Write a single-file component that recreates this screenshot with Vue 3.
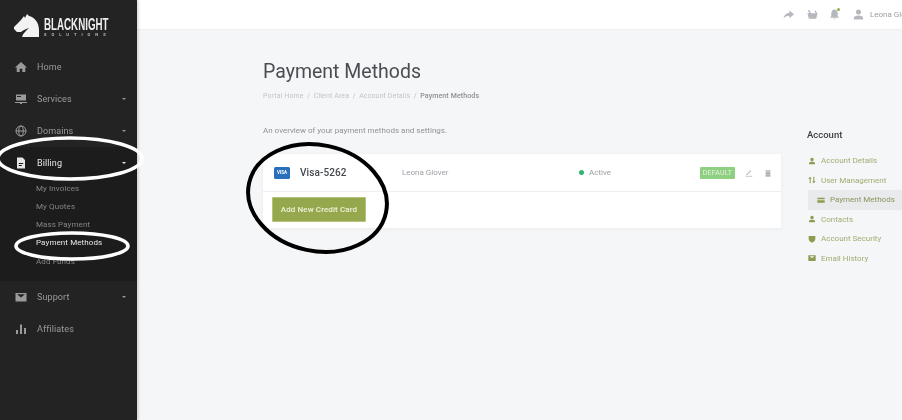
<template>
  <div class="page">
    <aside class="sidebar">
      <div class="logo">
        <svg class="horse" width="26" height="24" viewBox="0 0 26 24">
          <path d="M13 0 L15 2 C20 3 25 8 25 16 L25 23 L8 23 C9 19 12 17 15 14 C12 15 9 16 7 18 L3 18 L0 15 L0 13 L6 7 C8 5 9 3 10 2 L11 4 Z" fill="#f2f2f2" />
        </svg>
        <div class="logo-text">
          <div class="logo-name">BLACKNIGHT</div>
          <div class="logo-sub">SOLUTIONS</div>
        </div>
      </div>

      <nav>
        <div class="nav-item">
          <svg class="nav-icon" viewBox="0 0 12 12"><path d="M6 1 L12 6.5 L10.3 6.5 L10.3 11 L7.3 11 L7.3 7.7 L4.7 7.7 L4.7 11 L1.7 11 L1.7 6.5 L0 6.5 Z" fill="currentColor" /></svg>
          <span>Home</span>
        </div>
        <div class="nav-item">
          <svg class="nav-icon" viewBox="0 0 12 12"><path fill-rule="evenodd" d="M1 1.5 H11 V7.5 H1 Z M2 3 V4 H6 V3 Z M0 9 H12 V10 H0 Z M5 10 H7 V11 H5 Z" fill="currentColor" /></svg>
          <span>Services</span>
          <i class="caret"></i>
        </div>
        <div class="nav-item">
          <svg class="nav-icon" viewBox="0 0 12 12" fill="none" stroke="currentColor" stroke-width="1"><circle cx="6" cy="6" r="5" /><ellipse cx="6" cy="6" rx="2.2" ry="5" /><path d="M1 6 H11" /></svg>
          <span>Domains</span>
          <i class="caret"></i>
        </div>
        <div class="nav-item active">
          <svg class="nav-icon" viewBox="0 0 12 12"><path fill-rule="evenodd" d="M2 0.5 H7.5 L10 3 V11.5 H2 Z M3.8 6 V7 H8.2 V6 Z M3.8 8 V9 H6.8 V8 Z" fill="currentColor" /></svg>
          <span>Billing</span>
          <i class="caret"></i>
        </div>
        <div class="submenu">
          <div v-for="s in subItems" :key="s" class="sub-item" :class="{ current: s === 'Payment Methods' }">{{ s }}</div>
        </div>
        <div class="nav-item">
          <svg class="nav-icon" viewBox="0 0 12 12"><path fill-rule="evenodd" d="M0.5 2 H11.5 V10.5 H0.5 Z M2 3.2 L6 6.6 L10 3.2 Z" fill="currentColor" /></svg>
          <span>Support</span>
          <i class="caret"></i>
        </div>
        <div class="nav-item">
          <svg class="nav-icon" viewBox="0 0 12 12"><path d="M1 7 H3 V11 H1 Z M5 1.5 H7 V11 H5 Z M9 5 H11 V11 H9 Z" fill="currentColor" /></svg>
          <span>Affiliates</span>
        </div>
      </nav>
    </aside>

    <div class="main">
      <header class="topbar">
        <svg class="top-icon" viewBox="0 0 12 12"><path d="M7 1.5 L12 5.8 L7 10 V7.4 C4 7.4 2 8.2 0.5 10.5 C1 6.8 3.4 4.6 7 4.2 Z" fill="currentColor" /></svg>
        <svg class="top-icon basket" viewBox="0 0 12 12"><path d="M0.5 4.5 H11.5 L10 10.5 H2 Z M2.5 4.5 L1 1 H2.6 L4.2 4.5 Z M9.5 4.5 L8 2 H9.5 L11 4.5 Z" fill="currentColor" /></svg>
        <span class="bell">
          <svg class="top-icon" viewBox="0 0 12 12"><path d="M6 0.5 C8.4 0.5 9.5 2.5 9.5 5 V8 L11 9.5 H1 L2.5 8 V5 C2.5 2.5 3.6 0.5 6 0.5 Z M4.8 10.3 H7.2 L6 11.8 Z" fill="currentColor" /></svg>
          <i class="bell-dot"></i>
        </span>
        <svg class="top-icon user" viewBox="0 0 12 12"><path d="M6 0.5 A2.7 2.7 0 1 1 6 6 A2.7 2.7 0 1 1 6 0.5 Z M1 11.5 V9.5 C1 8 3 7 6 7 C9 7 11 8 11 9.5 V11.5 Z" fill="currentColor" /></svg>
        <span class="user-name">Leona Glover</span>
      </header>

      <div class="body">
        <section class="content">
          <h1>Payment Methods</h1>
          <div class="crumbs">
            <span>Portal Home</span><em>/</em><span>Client Area</span><em>/</em><span>Account Details</span><em>/</em><b>Payment Methods</b>
          </div>
          <p class="intro">An overview of your payment methods and settings.</p>

          <div class="card">
            <div class="row">
              <span class="visa">VISA</span>
              <span class="card-name">Visa-5262</span>
              <span class="holder">Leona Glover</span>
              <span class="status"><i class="dot"></i>Active</span>
              <span class="badge">DEFAULT</span>
              <svg class="act edit" viewBox="0 0 12 12" fill="none" stroke="currentColor" stroke-width="1.1"><path d="M2 8.5 L8 2 L9 3 L3 9.2 Z M1 11 H11" /></svg>
              <svg class="act" viewBox="0 0 12 12"><path d="M2.5 3.5 H9.5 V11.5 H2.5 Z M2 1.5 H10 V2.7 H2 Z" fill="currentColor" /></svg>
            </div>
            <div class="card-foot">
              <button type="button">Add New Credit Card</button>
            </div>
          </div>
        </section>

        <aside class="side">
          <h3>Account</h3>
          <ul>
            <li v-for="l in links" :key="l.label" :class="{ on: l.on }">
              <svg class="link-icon" viewBox="0 0 12 12"><path :d="l.icon" fill="currentColor" /></svg>
              {{ l.label }}
            </li>
          </ul>
        </aside>
      </div>
    </div>

    <!-- hand drawn marks on top of the screenshot -->
    <svg class="marks" width="902" height="420" viewBox="0 0 902 420" fill="none">
      <ellipse cx="70" cy="158.5" rx="72" ry="20.5" stroke="#fff" stroke-width="3.5" />
      <ellipse cx="72" cy="246" rx="56" ry="13" stroke="#fff" stroke-width="3.5" />
      <ellipse cx="317.5" cy="198" rx="70" ry="53" transform="rotate(12 317.5 198)" stroke="#000" stroke-width="4" />
    </svg>
  </div>
</template>

<script setup>
const subItems = ['My Invoices', 'My Quotes', 'Mass Payment', 'Payment Methods', 'Add Funds']

const person = 'M6 1 A2.6 2.6 0 1 1 6 6.2 A2.6 2.6 0 1 1 6 1 Z M1.5 11 V9.5 C1.5 8 3.5 7.2 6 7.2 C8.5 7.2 10.5 8 10.5 9.5 V11 Z'

const links = [
  { label: 'Account Details', icon: person },
  { label: 'User Management', icon: 'M3 1 L5.5 4 H4 V11 H2.5 V4 H0.5 Z M8 1 H9.5 V8 H11.5 L8.8 11 L6.2 8 H8 Z' },
  { label: 'Payment Methods', icon: 'M0.5 2.5 H11.5 V5 H0.5 Z M0.5 6.2 H11.5 V10 H0.5 Z', on: true },
  { label: 'Contacts', icon: person },
  { label: 'Account Security', icon: 'M1 1.5 H11 V6 C11 8.5 8.5 10.5 6 11.5 C3.5 10.5 1 8.5 1 6 Z' },
  { label: 'Email History', icon: 'M0.5 2 H11.5 V10.5 H0.5 Z M2.5 3.5 L6 6.5 L9.5 3.5 Z' }
]
</script>

<style>
html,
body {
  margin: 0;
  background: #f5f6f8;
}
</style>

<style scoped>
.page {
  position: relative;
  display: flex;
  width: 902px;
  height: 420px;
  overflow: hidden;
  background: #f5f6f8;
  font-family: Roboto, "Liberation Sans", sans-serif;
  filter: blur(0.4px);
}

.sidebar {
  flex: 0 0 137px;
  background: #232323;
  box-shadow: 1px 0 3px rgba(0, 0, 0, 0.2);
  z-index: 2;
}
.logo {
  height: 50.5px;
  display: flex;
  align-items: flex-start;
  padding: 14px 0 0 14px;
  gap: 4px;
  box-sizing: border-box;
}
.horse {
  flex: none;
}
.logo-text {
  color: #eee;
  margin-top: 4px;
}
.logo-name {
  font-family: "Liberation Sans", sans-serif;
  font-weight: 700;
  font-size: 16px;
  line-height: 14px;
  white-space: nowrap;
  transform: scaleX(0.61);
  transform-origin: left center;
  width: 66px;
}
.logo-sub {
  font-size: 4px;
  line-height: 5px;
  letter-spacing: 5px;
  font-weight: 700;
  white-space: nowrap;
  color: #bbb;
}

.nav-item {
  height: 32px;
  display: flex;
  align-items: center;
  padding: 0 11px 0 15px;
  color: #9a9a9a;
  font-size: 9px;
  letter-spacing: 0.1px;
}
.nav-item span {
  margin-left: 10px;
}
.nav-item.active {
  color: #e6e6e6;
  background: #1c1c1c;
}
.nav-icon {
  width: 12px;
  height: 12px;
  flex: none;
}
.caret {
  margin-left: auto;
  width: 0;
  height: 0;
  border-left: 2px solid transparent;
  border-right: 2px solid transparent;
  border-top: 2.5px solid currentColor;
}

.submenu {
  background: #1c1c1c;
  padding: 1px 0 10px 36px;
}
.sub-item {
  height: 18.3px;
  line-height: 18.3px;
  font-size: 8px;
  letter-spacing: 0.1px;
  color: #858585;
}
.sub-item.current {
  color: #e8e8e8;
}

.main {
  flex: 1;
  min-width: 0;
  display: flex;
  flex-direction: column;
}
.topbar {
  height: 29px;
  flex: none;
  background: #fff;
  box-shadow: 0 1px 2px rgba(0, 0, 0, 0.04);
  display: flex;
  align-items: center;
  padding-left: 646px;
  color: #b5b8bd;
  white-space: nowrap;
}
.top-icon {
  width: 11px;
  height: 11px;
  flex: none;
  margin-right: 13px;
  display: block;
}
.top-icon.basket {
  margin-right: 11px;
}
.bell {
  position: relative;
  margin-right: 13px;
}
.bell .top-icon {
  margin-right: 0;
}
.bell-dot {
  position: absolute;
  top: -1px;
  left: 8px;
  width: 3px;
  height: 3px;
  border-radius: 50%;
  background: #9aa94e;
}
.top-icon.user {
  margin-right: 6px;
}
.user-name {
  font-size: 8px;
  color: #9a9da3;
}

.body {
  flex: 1;
  display: flex;
  min-height: 0;
}
.content {
  width: 518px;
  margin-left: 126px;
  flex: none;
}
h1 {
  margin: 29px 0 0;
  font-size: 19.5px;
  line-height: 28px;
  font-weight: 400;
  color: #4a4d52;
}
.crumbs {
  margin-top: 5px;
  font-size: 7px;
  line-height: 10px;
  color: #c1c4c8;
  letter-spacing: 0.13px;
}
.crumbs em {
  font-style: normal;
  margin: 0 3.5px;
}
.crumbs b {
  font-weight: 500;
  color: #8b8e93;
}
.intro {
  margin: 24px 0 0;
  font-size: 8px;
  line-height: 12px;
  color: #8f9297;
}
.card {
  margin-top: 17px;
  background: #fff;
  border-radius: 2px;
  box-shadow: 0 1px 4px rgba(0, 0, 0, 0.05);
}
.row {
  height: 37px;
  display: flex;
  align-items: center;
  border-bottom: 1px solid #eeeff1;
  padding-left: 11px;
  padding-right: 9px;
}
.visa {
  width: 16px;
  height: 12px;
  flex: none;
  background: #2a6fbb;
  border-radius: 1.5px;
  color: #fff;
  font-size: 4.5px;
  font-weight: 700;
  line-height: 12px;
  text-align: center;
}
.card-name {
  margin-left: 10px;
  width: 102px;
  flex: none;
  font-size: 10px;
  font-weight: 500;
  color: #44474b;
  letter-spacing: 0.1px;
}
.holder {
  width: 177px;
  flex: none;
  font-size: 8px;
  color: #9b9ea3;
}
.status {
  display: flex;
  align-items: center;
  font-size: 8px;
  color: #9b9ea3;
}
.dot {
  width: 5px;
  height: 5px;
  border-radius: 50%;
  background: #2fb673;
  margin-right: 5px;
  margin-top: -1px;
}
.badge {
  margin-left: auto;
  width: 35px;
  height: 12px;
  line-height: 12px;
  text-align: center;
  background: #8fcf82;
  color: #e4f3df;
  border-radius: 1px;
  font-size: 7px;
  letter-spacing: 0.2px;
}
.act {
  width: 8px;
  height: 8px;
  flex: none;
  margin-left: 11px;
  color: #b4b6ba;
}
.edit {
  margin-left: 10px;
}
.card-foot {
  padding: 5px 0 6px 9px;
}
button {
  display: block;
  width: 94px;
  height: 25px;
  padding: 0;
  background: #96a84e;
  border: 1px solid #b4c27a;
  border-radius: 1px;
  color: #eef2d8;
  font-family: inherit;
  font-size: 8px;
  font-weight: 500;
  letter-spacing: 0.1px;
}

.side {
  margin-left: 26px;
  flex: 1;
  min-width: 0;
  white-space: nowrap;
}
h3 {
  margin: 100px 0 0;
  font-size: 9.5px;
  line-height: 12px;
  font-weight: 500;
  color: #3c3f44;
}
ul {
  list-style: none;
  margin: 10px 0 0;
  padding: 0;
}
li {
  height: 19.5px;
  display: flex;
  align-items: center;
  font-size: 8px;
  color: #a0ac72;
  margin-left: 1px;
}
.link-icon {
  width: 8px;
  height: 8px;
  flex: none;
  margin-right: 5px;
  color: #8c9c50;
}
li.on {
  background: #e9eaeb;
  color: #8a9660;
  padding-left: 9px;
}

.marks {
  position: absolute;
  top: 0;
  left: 0;
  z-index: 3;
  pointer-events: none;
}
</style>
